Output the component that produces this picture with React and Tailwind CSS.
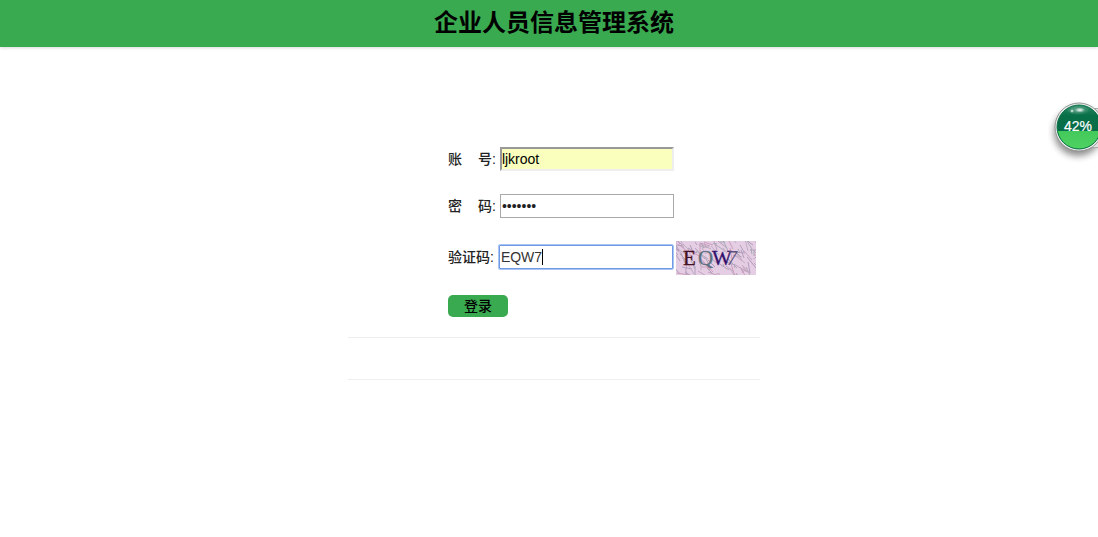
const field = "h-6 w-[174px] px-px text-sm outline-none";

function makeStrokes(count) {
  let seed = 17;
  const next = () => {
    seed = (seed * 1103515245 + 12345) % 2147483648;
    return seed / 2147483648;
  };
  const colors = ["#a08cae", "#b795b5", "#94a0a5", "#c58fae", "#9f93ac", "#b3a3b8"];
  return Array.from({ length: count }, (_, i) => {
    const x = Math.round(next() * 88) - 8;
    const y = Math.round(next() * 40) - 6;
    return {
      x1: x,
      y1: y,
      x2: x + Math.round(next() * 12),
      y2: y + Math.round(next() * 12),
      stroke: colors[i % colors.length],
    };
  });
}

const strokes = makeStrokes(120);

function Captcha() {
  return (
    <svg width="80" height="34" viewBox="0 0 80 34" role="img" aria-label="EQW7" className="ml-0.5 block shrink-0">
      <rect width="80" height="34" fill="#e5cde4" />
      <g strokeWidth="1" opacity="0.75">
        {strokes.map((s, i) => (
          <line key={i} {...s} />
        ))}
      </g>
      <text y="24" fontFamily="'Liberation Serif', serif" fontSize="21">
        <tspan x="7" fill="#45101f" stroke="#45101f" strokeWidth="0.3">E</tspan>
        <tspan x="22" fill="#5d7181" stroke="#5d7181" strokeWidth="0.3">Q</tspan>
        <tspan x="36" fill="#32106b" stroke="#32106b" strokeWidth="0.3">W</tspan>
        <tspan x="51" fill="#5f527c" fontSize="20" fontStyle="italic">7</tspan>
      </text>
    </svg>
  );
}

function UsageBall() {
  return (
    <div className="absolute top-[95px] right-0 w-[50px] overflow-hidden">
      <svg width="50" height="70" viewBox="0 0 50 70" role="img" aria-label="42%" className="block">
        <defs>
          <linearGradient id="dark" x1="0" y1="0" x2="0" y2="1">
            <stop offset="0" stopColor="#2a8a66" />
            <stop offset="0.25" stopColor="#087048" />
            <stop offset="1" stopColor="#05694a" />
          </linearGradient>
          <linearGradient id="level" x1="0" y1="0" x2="0" y2="1">
            <stop offset="0" stopColor="#43c95b" />
            <stop offset="1" stopColor="#4fd362" />
          </linearGradient>
          <radialGradient id="shine">
            <stop offset="0" stopColor="#fff" stopOpacity="0.95" />
            <stop offset="1" stopColor="#fff" stopOpacity="0" />
          </radialGradient>
          <filter id="soft" x="-30%" y="-30%" width="160%" height="160%">
            <feGaussianBlur stdDeviation="3.5" />
          </filter>
          <clipPath id="ball">
            <circle cx="31" cy="32" r="22" />
          </clipPath>
        </defs>
        <circle cx="30" cy="37" r="24" fill="#000" opacity="0.45" filter="url(#soft)" />
        <path d="M36 13.500H51V52.500H36Z" fill="#e4e4e4" stroke="#aaa" />
        <circle cx="31" cy="32" r="24" fill="#f0f0f0" stroke="#8f9592" />
        <g clipPath="url(#ball)">
          <rect x="8" y="9" width="46" height="46" fill="url(#dark)" />
          <rect x="8" y="36" width="46" height="20" fill="url(#level)" />
          <ellipse cx="30" cy="15" rx="12" ry="5" fill="url(#shine)" opacity="0.4" />
          <ellipse cx="32" cy="15" rx="5" ry="2.500" fill="url(#shine)" />
          <circle cx="24" cy="16" r="2" fill="url(#shine)" />
        </g>
        <circle cx="31" cy="32" r="22" fill="none" stroke="#0b7248" strokeWidth="1" />
        <text x="30" y="36" textAnchor="middle" fontFamily="'Liberation Sans', sans-serif" fontSize="14" fill="#fff" stroke="#fff" strokeWidth="0.2">42%</text>
      </svg>
    </div>
  );
}

export default function App() {
  return (
    <div className="relative min-h-screen bg-white font-['Liberation_Sans','Noto_Sans_CJK_SC',sans-serif] text-sm text-[#222]">
      <header className="flex h-[47px] items-start justify-center bg-[#3aaa50] pt-1 pl-2.5 shadow-[0_1px_3px_rgba(0,0,0,0.15)]">
        <h1 className="text-2xl leading-[38px] font-bold text-black">企业人员信息管理系统</h1>
      </header>

      <main className="flex justify-center pt-[100px] pl-2.5">
        <div className="w-full max-w-[412px]">
          <form className="flex flex-col items-start pb-5 pl-[100px]" onSubmit={(e) => e.preventDefault()}>
            <div className="mb-[23px] flex items-center gap-1">
              <label htmlFor="account" className="flex gap-4 font-medium whitespace-nowrap">
                <span>账</span>
                <span>号:</span>
              </label>
              <input
                id="account"
                type="text"
                defaultValue="ljkroot"
                className={`${field} border-2 border-t-[#999] border-r-[#eee] border-b-[#eee] border-l-[#999] bg-[#faffbd] pl-0 text-black`}
              />
            </div>
            <div className="mb-[23px] flex items-center gap-1">
              <label htmlFor="password" className="flex gap-4 font-medium whitespace-nowrap">
                <span>密</span>
                <span>码:</span>
              </label>
              <input id="password" type="password" defaultValue="1234567" className={`${field} border border-[#a9a9a9]`} />
            </div>
            <div className="mb-5 flex items-start">
              <div className="flex h-8 items-center gap-1">
                <label htmlFor="code" className="font-medium whitespace-nowrap">验证码:</label>
                <div className="relative">
                  <input
                    id="code"
                    type="text"
                    defaultValue="EQW7"
                    className="block h-[26px] w-44 rounded-xs border border-[#a9c5f5] px-0.5 text-sm text-[#333] caret-transparent shadow-[inset_0_0_0_1px_#6f9ae3] outline-none"
                  />
                  <span aria-hidden="true" className="absolute top-[5px] left-11 h-4 w-px bg-black" />
                </div>
              </div>
              <Captcha />
            </div>
            <button type="submit" className="h-[22px] w-[60px] rounded-[5px] bg-[#3aaa50] text-sm leading-5 font-medium text-black">登录</button>
          </form>
          <hr className="mb-[41px] border-[#eee]" />
          <hr className="border-[#eee]" />
        </div>
      </main>

      <UsageBall />
    </div>
  );
}
